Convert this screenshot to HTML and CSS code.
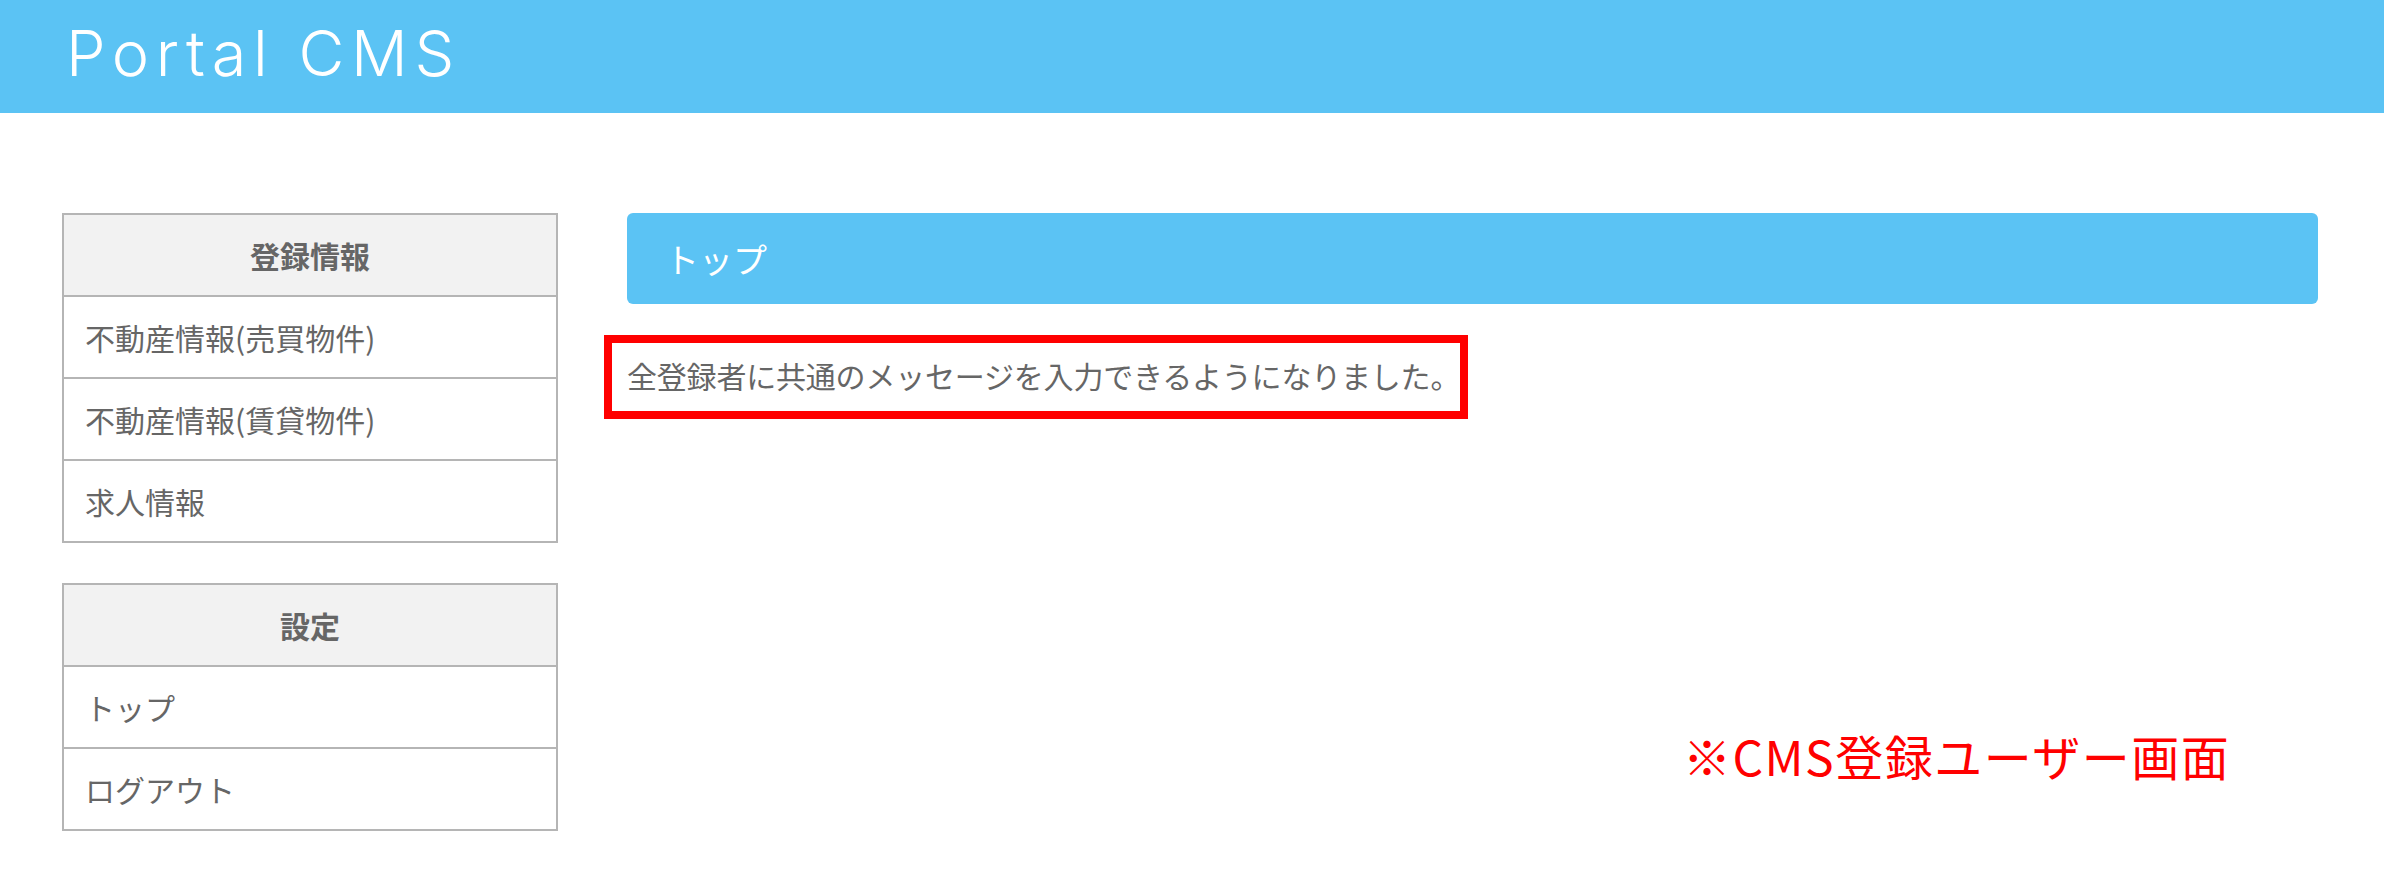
FILE: index.html
```html
<!DOCTYPE html>
<html lang="ja">
<head>
  <meta charset="UTF-8">
  <meta name="viewport" content="width=device-width, initial-scale=1.0">
  <title>Portal CMS</title>
  <link rel="stylesheet" href="styles.css">
</head>
<body>
  <header class="site-header">
    <h1 class="site-title">Portal CMS</h1>
  </header>

  <div class="page">
    <aside class="sidebar">
      <nav class="menu">
        <div class="menu-title">登録情報</div>
        <a class="menu-item" href="#">不動産情報(売買物件)</a>
        <a class="menu-item" href="#">不動産情報(賃貸物件)</a>
        <a class="menu-item" href="#">求人情報</a>
      </nav>
      <nav class="menu">
        <div class="menu-title">設定</div>
        <a class="menu-item" href="#">トップ</a>
        <a class="menu-item" href="#">ログアウト</a>
      </nav>
    </aside>

    <main class="content">
      <div class="content-title">トップ</div>
      <p class="message">全登録者に共通のメッセージを入力できるようになりました。</p>
    </main>

    <div class="note">※CMS登録ユーザー画面</div>
  </div>
</body>
</html>
```

FILE: styles.css
```css
body {
  margin: 0;
  padding: 0;
  font-family: "Noto Sans CJK JP", "Noto Sans", sans-serif;
  color: #666;
  background: #fff;
}
a {
  color: inherit;
  text-decoration: none;
}
.site-header {
  height: 113px;
  background: #5bc3f4;
  display: flex;
  align-items: center;
  padding: 0 0 6px 66px;
  box-sizing: border-box;
}
.site-title {
  margin: 0;
  font-family: Inter, "Noto Sans", sans-serif;
  font-weight: 300;
  font-size: 63px;
  letter-spacing: 6.6px;
  color: #fff;
  line-height: 1;
}
.page {
  position: relative;
  display: flex;
  gap: 69px;
  padding: 100px 66px 40px 62px;
}
.sidebar {
  width: 496px;
  flex-shrink: 0;
  display: flex;
  flex-direction: column;
  gap: 40px;
}
.menu {
  display: flex;
  flex-direction: column;
  border: 2px solid #b5b5b5;
}
.menu-title {
  height: 80px;
  display: flex;
  align-items: center;
  justify-content: center;
  background: #f2f2f2;
  font-size: 30px;
  font-weight: bold;
  color: #666;
}
.menu-item {
  height: 80px;
  display: flex;
  align-items: center;
  padding-left: 21px;
  border-top: 2px solid #b5b5b5;
  font-size: 30px;
  color: #666;
}
.content {
  flex: 1;
}
.content-title {
  height: 91px;
  display: flex;
  align-items: center;
  padding-left: 38px;
  background: #5bc3f4;
  border-radius: 6px;
  color: #fff;
  font-size: 34px;
}
.message {
  display: inline-block;
  margin: 31px 0 0 -23px;
  padding: 9px 0 13px 15px;
  border: 8px solid #ff0000;
  font-size: 30px;
  letter-spacing: -0.2px;
  line-height: 46px;
  color: #666;
}
.note {
  position: absolute;
  left: 1683px;
  top: 618px;
  font-size: 48px;
  letter-spacing: 1.5px;
  line-height: 48px;
  color: #ff0000;
}
```
